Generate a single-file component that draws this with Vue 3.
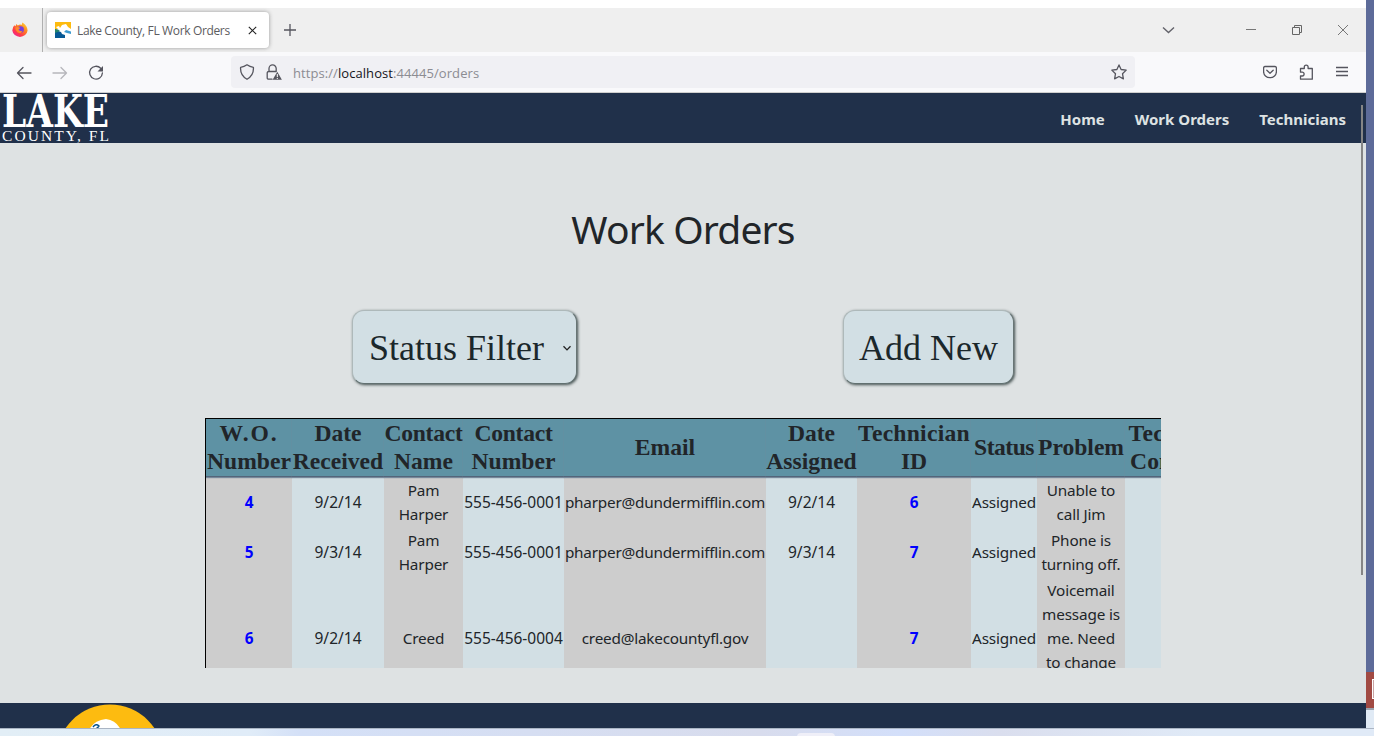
<script setup>
const nav = ['Home', 'Work Orders', 'Technicians']
const columns = [
  ['W.O.', 'Number'], ['Date', 'Received'], ['Contact', 'Name'], ['Contact', 'Number'],
  ['Email'], ['Date', 'Assigned'], ['Technician', 'ID'], ['Status'], ['Problem'], ['Technician', 'Comments']
]
const orders = [
  [['4'], ['9/2/14'], ['Pam', 'Harper'], ['555-456-0001'], ['pharper@dundermifflin.com'], ['9/2/14'], ['6'], ['Assigned'], ['Unable to', 'call Jim'], []],
  [['5'], ['9/3/14'], ['Pam', 'Harper'], ['555-456-0001'], ['pharper@dundermifflin.com'], ['9/3/14'], ['7'], ['Assigned'], ['Phone is', 'turning off.'], []],
  [['6'], ['9/2/14'], ['Creed'], ['555-456-0004'], ['creed@lakecountyfl.gov'], [], ['7'], ['Assigned'], ['Voicemail', 'message is', 'me. Need', 'to change', 'it.'], []]
]
const kinds = ['link', 'number', '', 'number', 'email', 'number', 'link', '', '', '']
const spacing = { 'W.O.': 'loose', Technician: 'open', Status: 'tight', Contact: 'snug' }
</script>

<template>
  <div class="desktop">
    <div class="window">
      <header class="tabs">
        <div class="pinned">
          <svg width="16" height="16" viewBox="0 0 16 16">
            <defs>
              <linearGradient id="fox" x1="1" y1="0" x2="0.2" y2="1">
                <stop offset="0" stop-color="#ffe640" /><stop offset=".4" stop-color="#ff8a20" />
                <stop offset=".75" stop-color="#ff3a4a" /><stop offset="1" stop-color="#f0209a" />
              </linearGradient>
            </defs>
            <path d="M2.4 3.2 3.5 4.2 4.4 2 5.8 3.5Q8 2 9.6 3L10.4.4Q15.6 3.8 15.6 8.5A7.7 7.2 0 0 1 .3 8.5Q.3 5 2.4 3.2Z" fill="url(#fox)" />
            <circle cx="8.6" cy="7.6" r="3.3" fill="#7540dd" />
            <path d="M3.2 5.6Q6 4.3 8.2 6L6.5 7.4Q8 9.8 10.8 8.4 9 12.2 5.6 10.6 3.3 9 3.2 5.6Z" fill="#ff8a2b" />
          </svg>
        </div>
        <div class="tab">
          <svg class="favicon" width="16" height="16" viewBox="0 0 16 16">
            <path d="M0 0H16V16H0Z" fill="#fff" />
            <path d="M0 0H16V7L13 5 11 2 7 3 5 6 4 4 1 5 3 7 0 8Z" fill="#fdbb10" />
            <path d="M0 10 3 9 6 10 7 12 10 13V16H0Z" fill="#075995" />
            <path d="M0 7 3 7.5 5 9 0 11Z" fill="#25836c" />
            <path d="M9 10 11 8 16 9.5V12L12 11Z" fill="#3d9bd0" />
          </svg>
          <span class="tab-title">Lake County, FL Work Orders</span>
          <svg class="tab-close" width="9" height="9" viewBox="0 0 9 9"><path d="M.8.8 8.2 8.2M8.2.8.8 8.2" stroke="#222" stroke-width="1.1" /></svg>
        </div>
        <svg class="plus" width="12" height="12" viewBox="0 0 12 12"><path d="M6 0V12M0 6H12" stroke="#55555e" stroke-width="1.3" /></svg>
        <div class="controls">
          <svg width="14" height="14" viewBox="0 0 14 14"><path d="M1 4.5 6.5 9.6 12 4.5" fill="none" stroke="#62626a" stroke-width="1.4" /></svg>
          <svg width="12" height="12" viewBox="0 0 12 12"><path d="M1 5.5H11" stroke="#777" /></svg>
          <svg width="12" height="12" viewBox="0 0 12 12"><path d="M1.5 3.5H8.5V10.5H1.5ZM3.5 3.5V1.5H10.5V8.5H8.5" fill="none" stroke="#666" /></svg>
          <svg width="12" height="12" viewBox="0 0 12 12"><path d="M1 1 11 11M11 1 1 11" stroke="#777" /></svg>
        </div>
      </header>

      <div class="toolbar">
        <div class="history">
          <svg width="16" height="16" viewBox="0 0 16 16"><path d="M15 8H1.5M7 2.5 1.5 8 7 13.5" class="stroke" /></svg>
          <svg class="dim" width="16" height="16" viewBox="0 0 16 16"><path d="M1 8H14.5M9 2.5 14.5 8 9 13.5" class="stroke" /></svg>
          <svg width="16" height="16" viewBox="0 0 16 16"><path d="M12.7 3.3A6.4 6.4 0 1 0 14.4 8" class="stroke" /><path d="M15 1V6.5H9.5Z" fill="#55555e" /></svg>
        </div>
        <div class="address">
          <svg width="16" height="16" viewBox="0 0 16 16"><path d="M8 .8Q10.8 2.9 14.4 3.3 15 11.4 8 15.3 1 11.4 1.6 3.3 5.2 2.9 8 .8Z" class="stroke" /></svg>
          <svg width="16" height="16" viewBox="0 0 16 16">
            <path d="M6 15.2H2.7Q1.2 15.2 1.2 13.7V9Q1.2 7.5 2.7 7.5H9.5M3 7.3V4.5A3.6 3.6 0 0 1 10.2 4.5V7.5" class="stroke" />
            <path d="M11.3 7.8 15.9 15.7H6.6Z" fill="#55555e" /><path d="M11.3 10V13M11.3 13.9V15" stroke="#fff" />
          </svg>
          <span class="url">https://<b>localhost</b>:44445/orders</span>
          <svg class="star" width="16" height="16" viewBox="0 0 16 16"><path d="M8 .9 10.1 5.5 15.2 6.1 11.5 9.7 12.4 14.8 8 12.5 3.6 14.8 4.5 9.7.8 6.1 5.9 5.5Z" class="stroke" /></svg>
        </div>
        <div class="tools">
          <svg width="14" height="14" viewBox="0 0 14 14"><path d="M2 1.5H12Q13.4 1.5 13.4 3V6.7A6.4 6 0 0 1 .6 6.7V3Q.6 1.5 2 1.5ZM3.8 5.2 7 8.2 10.2 5.2" class="stroke" /></svg>
          <svg width="15" height="16" viewBox="0 0 15 16"><path d="M1.5 4.5H5.3V3A1.9 1.9 0 0 1 9.1 3V4.5H13.3V15.2H1.5V12H3.2A1.9 1.9 0 0 0 3.2 8.2H1.5Z" class="stroke" /></svg>
          <svg width="12" height="12" viewBox="0 0 12 12"><path d="M0 1.5H12M0 5.5H12M0 9.5H12" class="stroke" /></svg>
        </div>
      </div>

      <div class="site-nav">
        <svg class="logo" width="110" height="50" viewBox="0 0 110 50">
          <text class="lake" x="2" y="34" font-size="45" font-weight="700" textLength="107" lengthAdjust="spacingAndGlyphs">LAKE</text>
          <text x="2" y="48" font-size="15.5" textLength="107" lengthAdjust="spacing">COUNTY, FL</text>
        </svg>
        <nav><a v-for="item in nav" :key="item">{{ item }}</a></nav>
        <div class="scrollbar"></div>
      </div>

      <main>
        <h1>Work Orders</h1>
        <div class="actions">
          <button class="filter"><span>Status Filter</span>
            <svg width="10" height="8" viewBox="0 0 10 8"><path d="M1.5 2.2 5 5.9 8.5 2.2" fill="none" stroke="#222" stroke-width="1.3" /></svg>
          </button>
          <button class="add"><span>Add New</span></button>
        </div>
        <div class="table-view">
          <div class="table">
            <div class="row head">
              <div v-for="(c, i) in columns" :key="i" class="cell"><span v-for="line in c" :key="line" :class="spacing[line]">{{ line }}</span></div>
            </div>
            <div v-for="order in orders" :key="order[0][0]" class="row">
              <div v-for="(c, i) in order" :key="i" class="cell" :class="kinds[i]"><span v-for="line in c" :key="line">{{ line }}</span></div>
            </div>
          </div>
        </div>
      </main>

      <footer>
        <svg width="220" height="25" viewBox="0 0 220 25">
          <circle cx="110" cy="55" r="53.5" fill="#fdbb10" />
          <path d="M89 27Q94 17 106 16 116 17 121 27Z" fill="#fff" />
          <path d="M93 24Q96 20 99 23L96 26M98 25 101 27" fill="none" stroke="#07518c" stroke-width="1.4" />
        </svg>
      </footer>
    </div>
    <aside><div class="red"><i></i></div><div class="floor"></div></aside>
    <div class="taskbar"><div class="task"></div></div>
  </div>
</template>

<style>
body { margin: 0; overflow: hidden; }
</style>
<style scoped>
* { box-sizing: border-box; }
svg { display: block; flex: none; }
.desktop { width: 1374px; height: 736px; display: grid; grid-template: 728px 8px / 1366px 8px; font-family: "Noto Sans", "Open Sans", sans-serif; background: #fff; }
.window { padding-top: 8px; display: flex; flex-direction: column; overflow: hidden; }
.stroke { fill: none; stroke: #55555e; stroke-width: 1.3; stroke-linecap: round; stroke-linejoin: round; }
.tabs { height: 44px; flex: none; background: #efefef; display: flex; align-items: center; }
.pinned { width: 43px; height: 44px; padding: 14px 0 0 12px; border-right: 1px solid #b0b0b0; }
.tab { width: 222px; height: 36px; margin-left: 4px; border-radius: 4px; background: #fff; box-shadow: 0 0 4px #999; display: flex; align-items: center; padding: 0 12px 0 8px; }
.tab-title { font-family: "Open Sans", sans-serif; font-size: 12px; letter-spacing: -.35px; color: #5c5c60; margin: 1px 0 0 6px; white-space: nowrap; }
.tab-close { margin-left: auto; }
.plus { margin-left: 15px; }
.controls { margin-left: auto; display: grid; grid-template-columns: 83px 46px 46px 29px; align-items: center; }
.toolbar { height: 41px; flex: none; background: #f9f9fb; border-bottom: 1px solid #cfcfce; display: flex; align-items: center; }
.history { width: 231px; padding: 1px 0 0 16px; display: flex; gap: 20px; }
.dim { opacity: .4; }
.address { width: 904px; height: 32px; background: #f0f0f4; border-radius: 4px; display: flex; align-items: center; padding: 0 8px; gap: 11px; }
.url { font-family: "Open Sans", sans-serif; font-size: 13px; letter-spacing: .07px; color: #8c8c92; padding-top: 2px; }
.url b { color: #15141a; font-weight: 400; }
.star { margin-left: auto; }
.tools { margin-left: auto; padding-right: 18px; display: flex; align-items: center; gap: 22px; }
.site-nav { height: 50px; flex: none; background: #20304a; display: flex; justify-content: space-between; align-items: center; position: relative; z-index: 1; }
.logo text { font-family: "Liberation Serif", serif; fill: #fff; }
.logo .lake { font-family: "DejaVu Serif", serif; }
nav { display: flex; gap: 30px; padding: 2px 20px 0 0; color: #dee2e3; font-size: 15px; font-weight: 700; }
.scrollbar { position: absolute; right: 3px; top: 12px; width: 2px; height: 470px; background: #858585; }
main { height: 560px; flex: none; background: #dee2e3; display: flex; flex-direction: column; align-items: center; }
h1 { margin: 56px 0 0; height: 60px; line-height: 60px; font-size: 39px; letter-spacing: -.85px; font-weight: 400; color: #212529; white-space: nowrap; }
.actions { margin-top: 51px; width: 662px; height: 74px; display: flex; justify-content: space-between; }
button { height: 74px; padding: 1px 15px 0; display: flex; align-items: center; border: 1px solid; border-color: #aeb9ba #687575 #617070 #aeb9ba; border-radius: 12px; background: #d2dfe4; box-shadow: 1px 1px 3px #435050; font: 36px "Liberation Serif", serif; color: #1b272b; white-space: nowrap; }
.filter { width: 225px; padding: 1px 4px 0 16px; justify-content: space-between; }
.add { width: 171px; }
.table-view { margin-top: 34px; width: 956px; height: 250px; border-top: 1px solid #000; border-left: 1px solid #000; overflow: hidden; }
.table { width: 1038px; }
.row { display: grid; grid-template-columns: 86px 92px 79px 101px 202px 91px 114px 66px 88px 119px; }
.cell { padding: 1px 0; display: flex; flex-direction: column; align-items: center; justify-content: center; background: #cdcdcd; color: #212529; font-size: 15.3px; letter-spacing: -.17px; line-height: 24px; white-space: nowrap; }
.cell:nth-child(even) { background: #d2dfe4; }
.cell.number { font-size: 15.5px; letter-spacing: 0; }
.cell.email { letter-spacing: -.22px; }
.head { position: relative; }
.head .cell { height: 58px; padding: 0 0 2px; background: #5e92a4; border-bottom: 1px solid #53657a; box-shadow: 0 1px 1px #77889a; font: bold 23.6px/28px "Liberation Serif", serif; letter-spacing: 0; }
.loose { letter-spacing: 1.8px; }
.open { letter-spacing: .25px; }
.tight { letter-spacing: -.5px; }
.snug { letter-spacing: -.25px; }
.cell.link { color: #00f; font-weight: 700; }
footer { height: 25px; flex: none; background: #20304a; }
aside { background: #5d6b99; display: flex; flex-direction: column; justify-content: flex-end; }
.red { height: 38px; background: #a14a43; padding: 7px 0 0 6px; overflow: hidden; border-bottom: 2px solid #9aa2ad; }
.red i { display: block; width: 12px; height: 20px; border: 1px solid #fff; background: #c9a3a4; }
.floor { height: 18px; background: #e0eaf5; }
.taskbar { grid-column: 1 / 3; border-top: 1px solid #aab5c4; background: linear-gradient(90deg, #e2eef6 0, #e0ecf8 250px, #d4e0f7 300px, #d8dced 760px, #d3dffa 900px, #dadeee 1000px, #e0eaf7 1200px); padding: 4px 0 0 797px; }
.task { width: 38px; height: 5px; border-radius: 4px 4px 0 0; background: #efeff8; }
</style>
